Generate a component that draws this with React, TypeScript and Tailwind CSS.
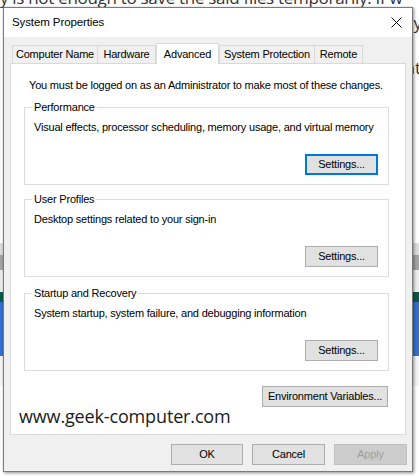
import React from "react"

const ui = "font-['Liberation_Sans',Arial,sans-serif] text-[11px] leading-[15px] tracking-[-0.2px] text-black whitespace-nowrap"

type BtnProps = {
  children: React.ReactNode
  className?: string
  focused?: boolean
  disabled?: boolean
}

const Btn: React.FC<BtnProps> = ({ children, className = "", focused, disabled }) => (
  <div
    className={
      "h-[21px] flex items-center justify-center " +
      (focused
        ? "border-2 border-[#0078d7] bg-[#e1e1e1] "
        : disabled
        ? "border border-[#bfbfbf] bg-[#cccccc] text-[#a0a0a0] "
        : "border border-[#adadad] bg-[#e1e1e1] ") +
      className
    }
  >
    {children}
  </div>
)

const Group: React.FC<{ title: string; desc: string; focused?: boolean; className?: string }> = ({
  title,
  desc,
  focused,
  className = "",
}) => (
  <div className={"ml-[13px] mr-[16px] border border-[#dcdcdc] flex flex-col pb-[9px] " + className}>
    <div className="-mt-[8px] ml-[7px] px-[2px] bg-white w-fit">{title}</div>
    <div className="mt-[5px] ml-[9px]">{desc}</div>
    <div className="mt-[19px] flex justify-end pr-[10px]">
      <Btn focused={focused} className="w-[73px]">Settings...</Btn>
    </div>
  </div>
)

const Tab: React.FC<{ label: string; active?: boolean; className?: string }> = ({ label, active, className = "" }) =>
  active ? (
    <div className={"h-[21px] -mb-px bg-white border border-b-0 border-[#d9d9d9] flex items-center justify-center relative z-10 " + className}>
      {label}
    </div>
  ) : (
    <div className={"h-[18px] bg-[#f0f0f0] border border-b-0 border-[#d9d9d9] flex items-center justify-center " + className}>
      {label}
    </div>
  )

export default function App() {
  return (
    <div className="relative w-[419px] h-[476px] overflow-hidden bg-white">
      {/* page behind the dialog */}
      <div className="flex flex-col font-['Open_Sans',sans-serif] text-[17px] leading-[25px] text-[#333]">
        <p className="-mt-[15px] whitespace-nowrap tracking-[-0.3px]">y is not enough to save the said files temporarily. If w</p>
        <p className="text-right -mr-[3px] whitespace-nowrap">by the way, we may</p>
        <p className="mt-[20px] text-right -mr-[2px] whitespace-nowrap">. that</p>
        <div className="mt-[163px] h-[12px] bg-[#dcdcdc]" />
        <div className="h-[15px] bg-[#a4a4a4]" />
        <div className="h-[22px] bg-[#ececec]" />
        <div className="h-[10px] bg-[#07594a]" />
        <div className="h-[54px] bg-[#3470d2]" />
        <div className="h-[30px] bg-[#f4f4f4]" />
      </div>

      {/* the dialog window */}
      <div
        className={
          "absolute left-[3px] top-[7px] w-[410px] h-[465px] border border-[#7a7a7a] bg-[#f0f0f0] flex flex-col shadow-[1px_1px_3px_rgba(0,0,0,0.45)] " +
          ui
        }
      >
        <div className="h-[29px] bg-white flex items-center justify-between pl-[8px] pr-[10px]">
          <span className="text-[11.5px] tracking-[-0.1px]">System Properties</span>
          <svg width="11" height="11" viewBox="0 0 11 11">
            <path d="M0.5 0.5 L10.5 10.5 M10.5 0.5 L0.5 10.5" stroke="#000" strokeWidth="1" />
          </svg>
        </div>

        <div className="pt-[6px] px-[6px] flex flex-col">
          <div className="flex items-end ml-[2px]">
            <Tab label="Computer Name" className="w-[86px]" />
            <Tab label="Hardware" className="w-[58px] border-l-0" />
            <Tab label="Advanced" active className="w-[63px]" />
            <Tab label="System Protection" className="w-[96px]" />
            <Tab label="Remote" className="w-[48px] border-l-0" />
          </div>

          <div className="h-[372px] border border-[#d9d9d9] bg-white flex flex-col">
            <div className="mt-[14px] ml-[18px]">
              You must be logged on as an Administrator to make most of these changes.
            </div>
            <Group
              className="mt-[14px]"
              title="Performance"
              desc="Visual effects, processor scheduling, memory usage, and virtual memory"
              focused
            />
            <Group className="mt-[14px]" title="User Profiles" desc="Desktop settings related to your sign-in" />
            <Group
              className="mt-[16px]"
              title="Startup and Recovery"
              desc="System startup, system failure, and debugging information"
            />
            <div className="mt-[15px] flex justify-end mr-[17px]">
              <Btn className="w-[126px]">Environment Variables...</Btn>
            </div>
            <div className="-mt-[3px] ml-[8px] font-['Open_Sans',sans-serif] text-[18px] leading-[24px] tracking-[-0.15px] text-[#1a1a1a]">
              www.geek-computer.com
            </div>
          </div>

          <div className="mt-[9px] flex justify-end gap-[9px] -mr-[1px]">
            <Btn className="w-[72px]">OK</Btn>
            <Btn className="w-[73px]">Cancel</Btn>
            <Btn disabled className="w-[73px]">Apply</Btn>
          </div>
        </div>
      </div>
    </div>
  )
}
